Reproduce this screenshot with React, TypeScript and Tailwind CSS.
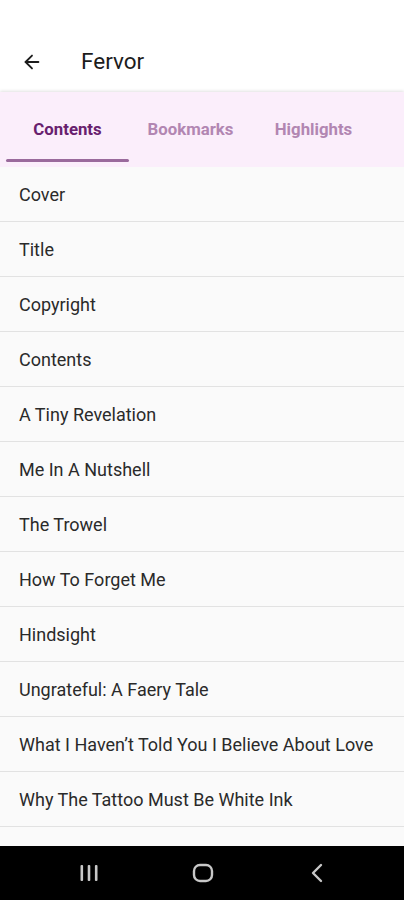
import { ArrowLeft } from "lucide-react";

const chapters = [
  "Cover",
  "Title",
  "Copyright",
  "Contents",
  "A Tiny Revelation",
  "Me In A Nutshell",
  "The Trowel",
  "How To Forget Me",
  "Hindsight",
  "Ungrateful: A Faery Tale",
  "What I Haven\u2019t Told You I Believe About Love",
  "Why The Tattoo Must Be White Ink",
  "",
];

const tabs = ["Contents", "Bookmarks", "Highlights"];

export default function App() {
  return (
    <div className="w-[404px] h-[900px] flex flex-col bg-white overflow-hidden font-['Roboto',sans-serif]">
      <div className="h-[92px] shrink-0 flex items-end pb-[15px] bg-white">
        <div className="flex items-center h-[30px]">
          <ArrowLeft className="ml-[21px] w-[22px] h-[22px] text-[#1c1c1c]" strokeWidth={2} />
          <span className="ml-[38px] text-[22.5px] text-[#1c1c1c]">Fervor</span>
        </div>
      </div>
      <div className="h-[75px] shrink-0 bg-[#fbeefb] shadow-[0_-1px_3px_rgba(0,0,0,0.12)] flex pl-[6px]">
        {tabs.map((t, i) => (
          <div
            key={t}
            className={
              "w-[123px] flex items-center justify-center relative text-[16.8px] font-bold " +
              (i === 0 ? "text-[#68206e]" : "text-[#b286b2]")
            }
          >
            <span className="mt-[1px]">{t}</span>
            {i === 0 && (
              <div className="absolute left-0 right-0 bottom-[5px] h-[3px] rounded-full bg-[#9a6a9c]" />
            )}
          </div>
        ))}
      </div>
      <div className="flex-1 bg-[#fafafa] overflow-hidden">
        {chapters.map((c, i) => (
          <div
            key={i}
            className="h-[55px] border-b border-[#e2e2e2] flex items-center pl-[19px] text-[18px] text-[#2a2a2a]"
          >
            {c}
          </div>
        ))}
      </div>
      <div className="h-[54px] shrink-0 bg-black flex items-center pl-[59px] gap-[54px]">
        <div className="w-[60px] flex justify-center">
          <svg width="20" height="18" viewBox="0 0 20 18">
            <rect x="1.5" y="1" width="2.6" height="16" rx="1" fill="#c8c8c8" />
            <rect x="8.7" y="1" width="2.6" height="16" rx="1" fill="#c8c8c8" />
            <rect x="15.9" y="1" width="2.6" height="16" rx="1" fill="#c8c8c8" />
          </svg>
        </div>
        <div className="w-[60px] flex justify-center">
          <svg width="22" height="20" viewBox="0 0 22 20">
            <rect x="2" y="2" width="18" height="16" rx="6" fill="none" stroke="#c8c8c8" strokeWidth="2.4" />
          </svg>
        </div>
        <div className="w-[60px] flex justify-center">
          <svg width="14" height="20" viewBox="0 0 14 20">
            <path d="M11 2 L3 10 L11 18" fill="none" stroke="#c8c8c8" strokeWidth="2.4" strokeLinecap="round" strokeLinejoin="round" />
          </svg>
        </div>
      </div>
    </div>
  );
}
